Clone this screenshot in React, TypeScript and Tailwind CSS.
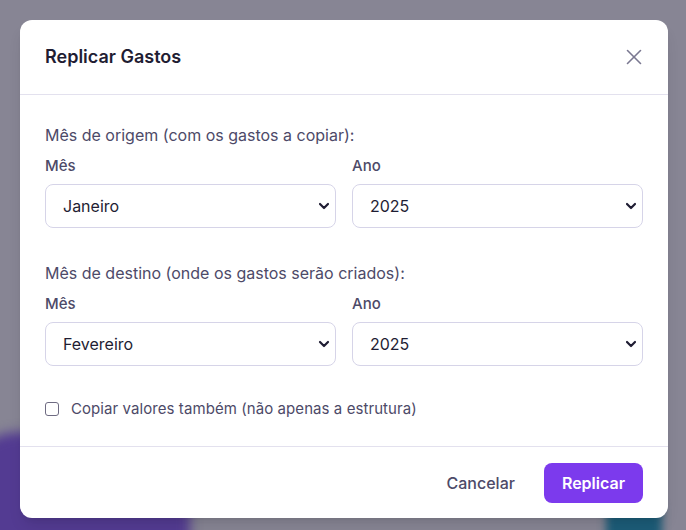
import { X } from "lucide-react";

function Chevron() {
  return (
    <svg
      className="pointer-events-none absolute right-[5px] top-1/2 -translate-y-1/2"
      width="12"
      height="12"
      viewBox="0 0 12 12"
      fill="none"
    >
      <path d="M2 4l4 4 4-4" stroke="#1f1d33" strokeWidth="2.2" strokeLinecap="round" strokeLinejoin="round" />
    </svg>
  );
}

function SelectBox({ value }: { value: string }) {
  return (
    <div className="relative h-[44px] w-full rounded-lg border border-[#d6d4e8] bg-white">
      <div className="flex h-full items-center pl-[17px] text-[16px] text-[#1f1d33]">{value}</div>
      <Chevron />
    </div>
  );
}

function MonthYear({ title, month, year, className }: { title: string; month: string; year: string; className?: string }) {
  return (
    <div className={className}>
      <p className="text-[16px] leading-6 text-[#4d4a68]">{title}</p>
      <div className="mt-[9px] grid grid-cols-2 gap-4">
        <div>
          <p className="mb-[8px] text-[15px] leading-5 font-medium text-[#4d4a68]">Mês</p>
          <SelectBox value={month} />
        </div>
        <div>
          <p className="mb-[8px] text-[15px] leading-5 font-medium text-[#4d4a68]">Ano</p>
          <SelectBox value={year} />
        </div>
      </div>
    </div>
  );
}

export default function App() {
  return (
    <div className="relative h-[530px] w-[686px] overflow-hidden bg-[#878594] font-['Inter',sans-serif]">
      {/* blurred page behind the overlay */}
      <div className="absolute -left-10 top-[432px] h-[200px] w-[230px] rounded-[60px] bg-[#533b92] blur-[6px]" />
      <div className="absolute left-[606px] top-[500px] h-[60px] w-[56px] rounded-lg bg-[#1c5c78] blur-[4px]" />

      <div className="relative flex h-full items-start pt-5 pl-5">
        <div className="w-[648px] overflow-hidden rounded-xl bg-white shadow-lg">
          <div className="flex items-center justify-between border-b border-[#e3e1ee] px-[25px] py-[23px]">
            <h2 className="text-[18px] leading-7 font-semibold text-[#1f1d33]">Replicar Gastos</h2>
            <X size={26} strokeWidth={1.5} className="mr-[-4px] text-[#7a7891]" />
          </div>

          <div className="px-[25px] pt-[28px] pb-[25px]">
            <MonthYear title="Mês de origem (com os gastos a copiar):" month="Janeiro" year="2025" />
            <MonthYear
              className="mt-[33px]"
              title="Mês de destino (onde os gastos serão criados):"
              month="Fevereiro"
              year="2025"
            />
            <div className="mt-[31px] flex items-center gap-3">
              <div className="h-[14px] w-[14px] rounded-[3px] border-[1.5px] border-[#6e6b82] bg-white" />
              <span className="text-[15px] leading-6 tracking-[0.005em] text-[#4d4a68]">
                Copiar valores também (não apenas a estrutura)
              </span>
            </div>
          </div>

          <div className="flex items-center justify-end gap-[29px] border-t border-[#e3e1ee] px-[25px] pt-4 pb-[15px]">
            <button className="text-[16px] font-medium text-[#4d4a68]">Cancelar</button>
            <button className="h-10 rounded-lg bg-[#7c3aed] px-[18px] text-[16px] font-semibold text-white">
              Replicar
            </button>
          </div>
        </div>
      </div>
    </div>
  );
}
